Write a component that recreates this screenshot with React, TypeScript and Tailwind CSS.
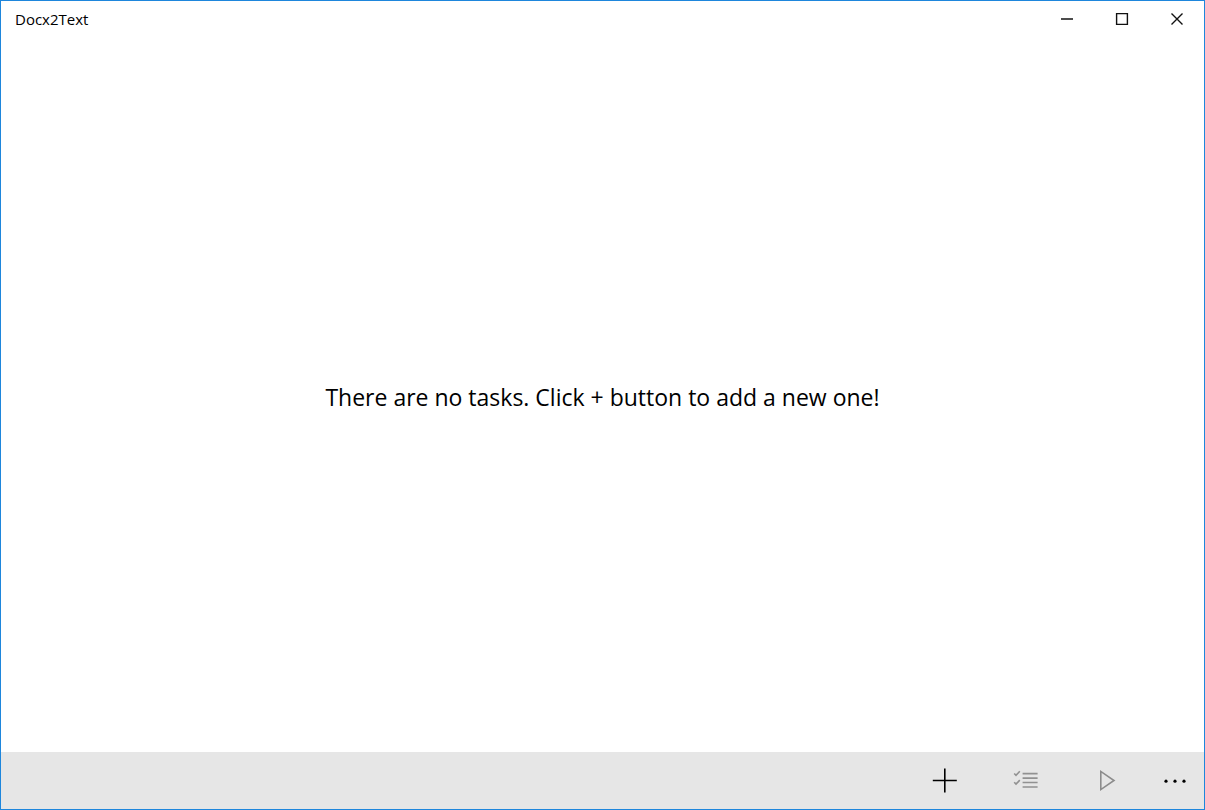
import React from "react";

type Props = {};

const TitleBar = () => {
  return (
    <header className="flex h-9 items-center justify-between">
      <h1 className="pl-[14px] text-[15px] leading-5">Docx2Text</h1>
      <div className="flex h-full">
        <button type="button" aria-label="Minimize" className="flex w-[55px] items-center justify-center">
          <svg width="14" height="14" viewBox="0 0 14 14" fill="none" stroke="#4d4d4d">
            <path d="M1 7h12" strokeWidth="2" />
          </svg>
        </button>
        <button type="button" aria-label="Maximize" className="flex w-[55px] items-center justify-center">
          <svg width="14" height="14" viewBox="0 0 14 14" fill="none" stroke="#111">
            <path d="M1.6 1.6h10.8v10.8H1.6z" strokeWidth="1.4" />
          </svg>
        </button>
        <button type="button" aria-label="Close" className="flex w-[55px] items-center justify-center">
          <svg width="14" height="14" viewBox="0 0 14 14" fill="none" stroke="#111">
            <path d="M1.5 1.5l11 11M12.5 1.5l-11 11" strokeWidth="1.4" />
          </svg>
        </button>
      </div>
    </header>
  );
};

const CommandBar = () => {
  return (
    <footer className="flex h-[57px] justify-end bg-[#e6e6e6]">
      <button type="button" aria-label="Add" className="flex w-[81px] items-center justify-center">
        <svg width="25" height="25" viewBox="0 0 25 25" fill="none" stroke="#000">
          <path d="M12.8 0.5v24M0.8 12.5h24" strokeWidth="1.6" />
        </svg>
      </button>
      <button type="button" aria-label="Select" disabled className="flex w-[81px] items-center justify-center">
        <svg width="25" height="25" viewBox="0 0 25 25" fill="none" stroke="#919191">
          <path d="M9.6 5.6h15M9.6 10.1h15M9.6 14.5h15M9.6 19h15" strokeWidth="1.7" />
          <path d="M1.2 5.5l1.8 1.8L6.8 3.3M1.2 14.3l1.8 1.8L6.8 12.1" strokeWidth="1.6" />
        </svg>
      </button>
      <button type="button" aria-label="Start" disabled className="flex w-[81px] items-center justify-center">
        <svg width="25" height="25" viewBox="0 0 25 25" fill="none" stroke="#8c8c8c">
          <path d="M6.8 3.4v18.2L20 12.5z" strokeWidth="1.6" />
        </svg>
      </button>
      <button type="button" aria-label="More" className="flex w-[57px] items-center justify-center">
        <svg width="25" height="25" viewBox="0 0 25 25" fill="#000">
          <circle cx="3" cy="13.2" r="1.6" />
          <circle cx="12" cy="13.2" r="1.6" />
          <circle cx="21" cy="13.2" r="1.6" />
        </svg>
      </button>
    </footer>
  );
};

const App = (props: Props) => {
  return (
    <div className="flex min-h-screen flex-col border border-[#1e86dc] bg-white font-['Open_Sans','Noto_Sans',sans-serif] text-black">
      <TitleBar />
      <main className="flex flex-1 items-center justify-center pt-1">
        <p className="text-center text-[23px] leading-8">
          There are no tasks. Click + button to add a new one!
        </p>
      </main>
      <CommandBar />
    </div>
  );
};

export default App;
